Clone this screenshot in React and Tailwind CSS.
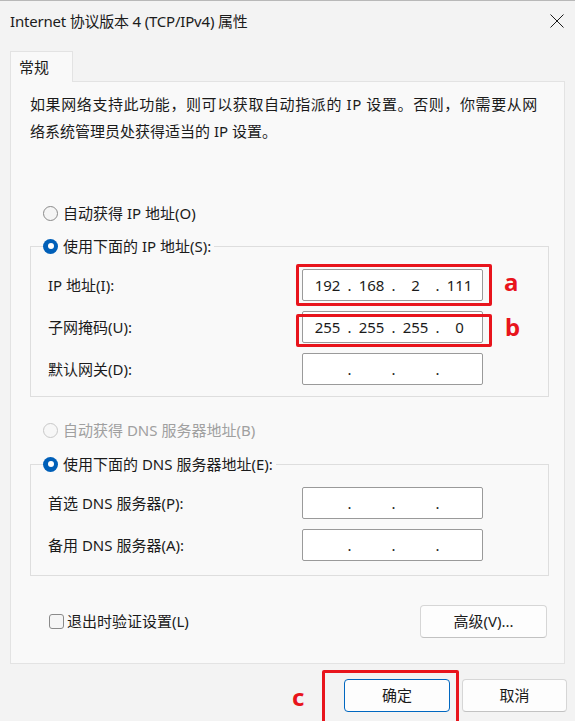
import React from "react";

function Radio({ checked, disabled }) {
  if (checked) {
    return (
      <span className="w-[15px] h-[15px] rounded-full bg-[#005fb8] flex items-center justify-center shrink-0">
        <span className="w-[6px] h-[6px] rounded-full bg-white" />
      </span>
    );
  }
  return (
    <span
      className={
        disabled
          ? "w-[15px] h-[15px] rounded-full border border-[#c8c8c8] bg-[#f7f7f7] shrink-0"
          : "w-[15px] h-[15px] rounded-full border border-[#8a8a8a] bg-[#f5f5f5] shrink-0"
      }
    />
  );
}

function IpBox({ parts }) {
  const p = parts || ["", "", "", ""];
  return (
    <div className="w-[181px] h-[32px] bg-white border border-[#9a9a9a] rounded-[2px] flex items-center pl-[6px] text-[15px] text-[#1b1b1b]">
      <span className="w-[37px] text-center">{p[0]}</span>
      <span className="w-[7px] text-center">.</span>
      <span className="w-[37px] text-center">{p[1]}</span>
      <span className="w-[7px] text-center">.</span>
      <span className="w-[37px] text-center">{p[2]}</span>
      <span className="w-[7px] text-center">.</span>
      <span className="w-[37px] text-center">{p[3]}</span>
    </div>
  );
}

function Row({ label, parts }) {
  return (
    <div className="flex items-center">
      <span className="w-[271px] pl-[17px] shrink-0">{label}</span>
      <IpBox parts={parts} />
    </div>
  );
}

export default function App() {
  return (
    <div lang="zh-CN" className="w-[575px] h-[721px] bg-[#f3f3f3] relative overflow-hidden border-t border-[#b8b8b8] text-[15px] text-[#1b1b1b] font-['Noto_Sans','Noto_Sans_CJK_SC',sans-serif]">
      {/* title bar */}
      <div className="h-[39px] flex items-center justify-between pl-[10px] pr-[10px]">
        <span className="leading-[20px] tracking-[-0.2px]">Internet 协议版本 4 (TCP/IPv4) 属性</span>
        <svg width="14" height="14" viewBox="0 0 14 14" className="mr-[1px]">
          <path d="M0.5 0.5 L13.5 13.5 M13.5 0.5 L0.5 13.5" stroke="#1b1b1b" strokeWidth="1" fill="none" />
        </svg>
      </div>

      {/* tab */}
      <div className="px-[10px] mt-[11px]">
        <div className="relative z-10 -mb-px w-[63px] h-[31px] bg-[#f9f9f9] border border-b-0 border-[#e3e3e3] flex items-center pl-[8px]">
          常规
        </div>

        {/* panel */}
        <div className="h-[583px] bg-[#f9f9f9] border border-[#e3e3e3] flex flex-col">
          <p className="pt-[9px] pl-[19px] leading-[27px] whitespace-nowrap">
            <span className="tracking-[0.6px]">如果网络支持此功能，则可以获取自动指派的 IP 设置。否则，你需要从网</span>
            <br />
            络系统管理员处获得适当的 IP 设置。
          </p>

          <div className="mt-[58px] ml-[32px] h-[20px] flex items-center gap-[5px]">
            <Radio />
            <span>自动获得 IP 地址(O)</span>
          </div>

          <fieldset className="mt-[13px] ml-[19px] w-[519px] border border-[#dedede] pb-[11px]">
            <legend className="ml-[12px] pr-[3px] h-[20px] flex items-center gap-[5px]">
              <Radio checked />
              <span>使用下面的 IP 地址(S):</span>
            </legend>
            <div className="pt-[13px] flex flex-col gap-[10px]">
              <Row label="IP 地址(I):" parts={["192", "168", "2", "111"]} />
              <Row label="子网掩码(U):" parts={["255", "255", "255", "0"]} />
              <Row label="默认网关(D):" />
            </div>
          </fieldset>

          <div className="mt-[23px] ml-[32px] h-[20px] flex items-center gap-[5px] text-[#a0a0a0]">
            <Radio disabled />
            <span>自动获得 DNS 服务器地址(B)</span>
          </div>

          <fieldset className="mt-[14px] ml-[19px] w-[519px] border border-[#dedede] pb-[14px]">
            <legend className="ml-[12px] pr-[3px] h-[20px] flex items-center gap-[5px]">
              <Radio checked />
              <span>使用下面的 DNS 服务器地址(E):</span>
            </legend>
            <div className="pt-[13px] flex flex-col gap-[10px]">
              <Row label="首选 DNS 服务器(P):" />
              <Row label="备用 DNS 服务器(A):" />
            </div>
          </fieldset>

          <div className="mt-[29px] ml-[38px] mr-[17px] flex items-center justify-between">
            <div className="flex items-center gap-[3px]">
              <span className="w-[15px] h-[15px] rounded-[3px] border border-[#8a8a8a] bg-[#f5f5f5]" />
              <span>退出时验证设置(L)</span>
            </div>
            <button className="w-[127px] h-[33px] bg-[#fdfdfd] border border-[#d6d6d6] border-b-[#c2c2c2] rounded-[4px]">
              高级(V)...
            </button>
          </div>
        </div>
      </div>

      {/* dialog buttons */}
      <div className="mt-[15px] pr-[8px] flex justify-end gap-[12px]">
        <button className="w-[106px] h-[33px] bg-[#fdfdfd] border border-[#0067c0] rounded-[4px]">确定</button>
        <button className="w-[105px] h-[33px] bg-[#fdfdfd] border border-[#d6d6d6] border-b-[#c2c2c2] rounded-[4px]">取消</button>
      </div>

      {/* annotations */}
      <div className="absolute left-[296px] top-[263px] w-[196px] h-[42px] border-[3px] border-[#e8141c] rounded-[2px]" />
      <div className="absolute left-[296px] top-[313px] w-[196px] h-[33px] border-[3px] border-[#e8141c] rounded-[2px]" />
      <div className="absolute left-[322px] top-[669px] w-[137px] h-[56px] border-[3px] border-[#e8141c] rounded-[2px]" />
      <span className="absolute left-[504px] top-[266px] text-[24px] leading-[30px] font-bold text-[#e8141c]">a</span>
      <span className="absolute left-[505px] top-[311px] text-[24px] leading-[30px] font-bold text-[#e8141c]">b</span>
      <span className="absolute left-[292px] top-[681px] text-[24px] leading-[30px] font-bold text-[#e8141c]">c</span>
    </div>
  );
}
